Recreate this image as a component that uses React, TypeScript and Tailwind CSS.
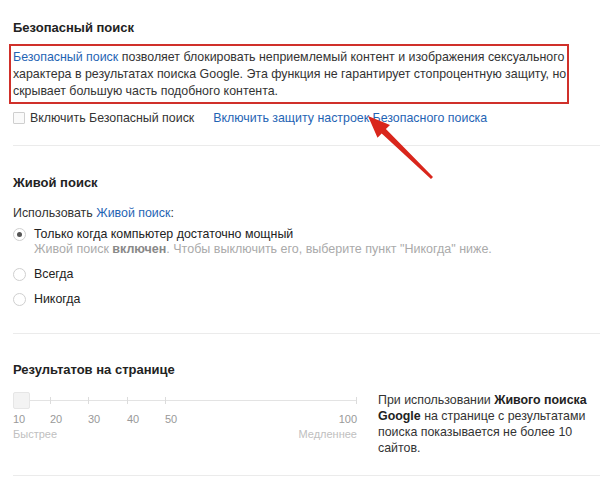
import React from "react";

export default function App() {
  return (
    <div
      className="relative w-[600px] h-[485px] bg-white overflow-hidden text-[12.4px] text-[#333]"
      style={{ fontFamily: '"Liberation Sans", Arial, sans-serif' }}
    >
      {/* Safe search */}
      <div className="pl-[13px] pt-[20px]">
        <div className="h-[16px] leading-[16px] text-[13px] font-bold text-[#222]">Безопасный поиск</div>
        <div className="mt-[8px] ml-[-4px] w-[560px] border-2 border-[#d0302a] px-[2px] pt-[3px] pb-[2px] leading-[17px] whitespace-nowrap">
          <span className="text-[#1f64b4]">Безопасный поиск</span> позволяет блокировать неприемлемый контент и изображения сексуального
          <br />
          характера в результатах поиска Google. Эта функция не гарантирует стопроцентную защиту, но
          <br />
          скрывает большую часть подобного контента.
        </div>
        <div className="mt-[6px] flex items-center h-[16px] leading-[16px] whitespace-nowrap">
          <span className="w-[12px] h-[12px] border border-[#cfcfcf] bg-[#fafafa] rounded-[1px]" />
          <span className="ml-[5px]">Включить Безопасный поиск</span>
          <span className="ml-[19px] text-[#1f64b4]">Включить защиту настроек Безопасного поиска</span>
        </div>
      </div>
      <div className="ml-[13px] mt-[19px] h-px bg-[#ebebeb]" />

      {/* Instant search */}
      <div className="pl-[13px]">
        <div className="mt-[29px] h-[16px] leading-[16px] text-[13px] font-bold text-[#222]">Живой поиск</div>
        <div className="mt-[14px] h-[16px] leading-[16px]">
          Использовать <span className="text-[#1f64b4]">Живой поиск</span>:
        </div>
        <div className="mt-[5px] flex items-center h-[16px] leading-[16px]">
          <span className="w-[13px] h-[13px] rounded-full border border-[#cfcfcf] flex items-center justify-center">
            <span className="w-[5px] h-[5px] rounded-full bg-[#555]" />
          </span>
          <span className="ml-[8px] text-[#222]">Только когда компьютер достаточно мощный</span>
        </div>
        <div className="ml-[21px] h-[14px] leading-[14px] text-[12.5px] text-[#aaa] whitespace-nowrap">
          Живой поиск <span className="font-bold text-[#888]">включен</span>. Чтобы выключить его, выберите пункт "Никогда" ниже.
        </div>
        <div className="mt-[10px] flex items-center h-[16px] leading-[16px]">
          <span className="w-[13px] h-[13px] rounded-full border border-[#cfcfcf]" />
          <span className="ml-[8px] text-[#222]">Всегда</span>
        </div>
        <div className="mt-[9px] flex items-center h-[16px] leading-[16px]">
          <span className="w-[13px] h-[13px] rounded-full border border-[#cfcfcf]" />
          <span className="ml-[8px] text-[#222]">Никогда</span>
        </div>
      </div>
      <div className="ml-[13px] mt-[26px] h-px bg-[#ebebeb]" />

      {/* Results per page */}
      <div className="pl-[13px]">
        <div className="mt-[28px] h-[16px] leading-[16px] text-[13px] font-bold text-[#222]">Результатов на странице</div>
        <div className="mt-[14px] flex">
          <div className="w-[344px]">
            <div className="relative h-[17px]">
              <div className="absolute left-0 right-0 top-[8px] h-px bg-[#e3e3e3]" />
              <div className="absolute left-[37px] top-[5px] w-px h-[7px] bg-[#dcdcdc]" />
              <div className="absolute left-[75px] top-[5px] w-px h-[7px] bg-[#dcdcdc]" />
              <div className="absolute left-[114px] top-[5px] w-px h-[7px] bg-[#dcdcdc]" />
              <div className="absolute left-[152px] top-[5px] w-px h-[7px] bg-[#dcdcdc]" />
              <div className="absolute right-0 top-[5px] w-px h-[7px] bg-[#dcdcdc]" />
              <div className="absolute left-0 top-0 w-[17px] h-[17px] bg-[#f3f3f3] border border-[#e6e6e6] rounded-[2px]" />
            </div>
            <div className="mt-[3px] flex h-[14px] leading-[14px] text-[11px] text-[#999]">
              <span className="w-[37px]">10</span>
              <span className="w-[38px]">20</span>
              <span className="w-[39px]">30</span>
              <span className="w-[38px]">40</span>
              <span className="w-[38px]">50</span>
              <span className="ml-auto">100</span>
            </div>
            <div className="mt-[1px] flex h-[14px] leading-[14px] text-[11px] text-[#c0c0c0]">
              <span>Быстрее</span>
              <span className="ml-auto">Медленнее</span>
            </div>
          </div>
          <div className="ml-[21px] w-[215px] leading-[16px] text-[#333]">
            При использовании <b className="text-[#222]">Живого поиска Google</b> на странице с результатами поиска показывается не более 10 сайтов.
          </div>
        </div>
      </div>
      <div className="absolute left-[13px] right-0 top-[475px] h-px bg-[#ebebeb]" />

      {/* Red arrow annotation */}
      <svg className="absolute left-0 top-0 pointer-events-none" width="600" height="485">
        <polygon
          points="368,116 390,125 385.9,129.1 433,176.9 431,179.1 381.7,133.5 377.5,137.8"
          fill="#d9261c"
        />
      </svg>
    </div>
  );
}
